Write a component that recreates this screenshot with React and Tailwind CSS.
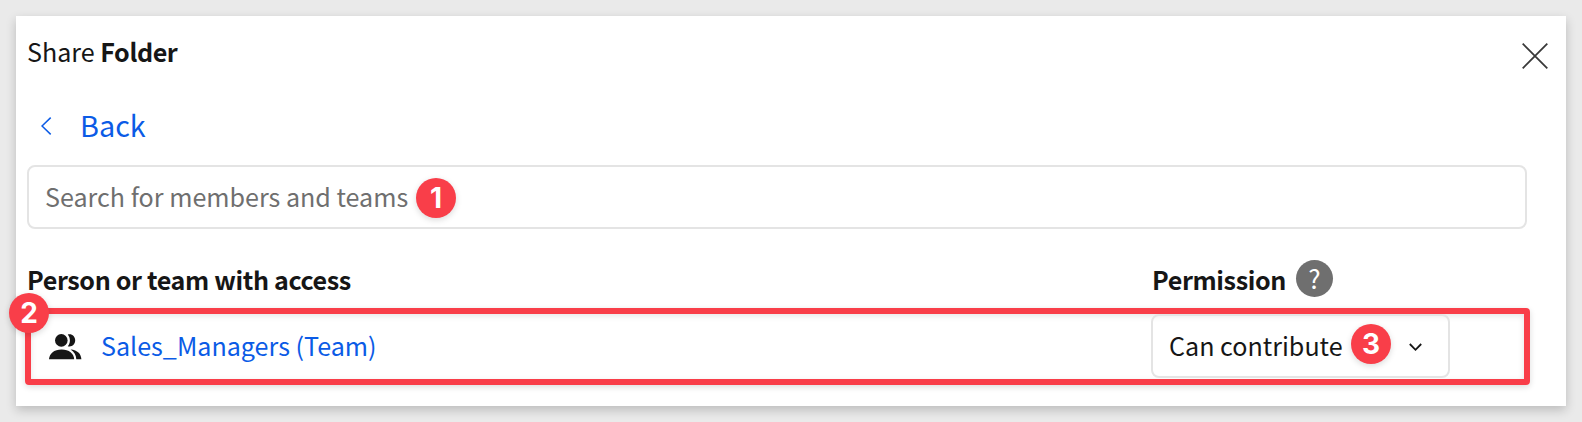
function Badge({ children, className }) {
  return (
    <span
      className={`absolute flex size-10 items-center justify-center rounded-full bg-[#f93e49] font-['Inter'] text-[28px] leading-none font-bold tracking-normal text-white shadow-[0_2px_6px_rgba(0,0,0,0.15)] ${className}`}
    >
      {children}
    </span>
  );
}

function PeopleIcon() {
  return (
    <svg className="ml-[18px] h-[26px] w-[33px] shrink-0" viewBox="0 0 33 26" fill="#161616">
      <circle cx="12.3" cy="6.4" r="6.3" />
      <path d="M0 25.3C0.4 19.3 5 15.4 12.6 15.4S24.8 19.3 25.2 25.3Z" />
      <path d="M18.8 0.5C22.8-0.7 26.2 2.4 26.2 6.3S22.8 13.5 18.8 12.3C21.6 9 21.6 4 18.8 0.5Z" />
      <path d="M21.6 15.6C28.5 16.2 32 19.8 32.4 25.3H27.3C27.1 21.3 25.4 18 21.6 15.6Z" />
    </svg>
  );
}

export default function App() {
  return (
    <div className="h-[422px] w-[1582px] overflow-hidden bg-[#eaeaea] p-4 font-['Noto_Sans_CJK_SC',sans-serif] text-[25.1px] leading-[36px] whitespace-nowrap text-[#161616]">
      <section className="h-[390px] w-[1550px] bg-white pl-[11px] shadow-[0_4px_10px_rgba(0,0,0,0.2)]">
        <header className="flex h-[70px] items-center justify-between">
          <h1>
            Share <b className="font-bold tracking-[-0.4px]">Folder</b>
          </h1>
          <button aria-label="Close" className="mt-[10px] mr-[18px]">
            <svg className="size-[26px]" viewBox="0 0 26 26" stroke="#393939" strokeWidth="1.8">
              <path d="M0.7 0.7 25.3 25.3M25.3 0.7 0.7 25.3" />
            </svg>
          </button>
        </header>
        <a className="flex h-[76px] items-center pl-[14px] text-[28.8px] text-[#0b5be6]">
          <svg className="mt-1 mr-[28px] h-[18px] w-[11px]" viewBox="0 0 11 18" fill="none" stroke="currentColor" strokeWidth="1.5">
            <path d="M9.7 0.6 1 9 9.7 17.4" />
          </svg>
          <span className="mt-[2px]">Back</span>
        </a>
        <div className="relative mt-[3px] flex h-16 w-[1500px] items-center rounded-lg border-2 border-[#e4e4e4] pb-[2px] pl-[16px] text-[#6f6f6f]">
          Search for members and teams
          <Badge className="top-[11px] left-[387px]">1</Badge>
        </div>
        <div className="mt-[21px] flex h-[58px] items-center font-bold tracking-[-0.37px]">
          <span className="w-[1125px]">Person or team with access</span>
          <span>Permission</span>
          <span className="mb-px ml-[10px] flex size-[37px] items-center justify-center rounded-full bg-[#6f6f6f] pb-px text-[26px] font-normal tracking-normal text-white">
            ?
          </span>
        </div>
        <div className="relative -ml-[2px] flex h-[77px] w-[1505px] items-center rounded-[4px] border-[6px] border-[#f93e49] shadow-[0_2px_6px_rgba(0,0,0,0.14),inset_0_2px_6px_rgba(0,0,0,0.1)]">
          <PeopleIcon />
          <a className="mb-[3px] ml-[19px] w-[1050px] text-[#0b5be6]">Sales_Managers (Team)</a>
          <div className="relative mb-px flex h-16 w-[299px] items-center rounded-lg border-2 border-[#e4e4e4] pb-[3px] pl-[16px]">
            Can contribute
            <Badge className="top-[8px] left-[198px]">3</Badge>
            <svg className="absolute top-[27px] left-[256px] h-[9px] w-[13px]" viewBox="0 0 13 9" fill="none" stroke="#161616" strokeWidth="1.8">
              <path d="M0.8 1 6.5 6.8 12.2 1" />
            </svg>
          </div>
          <Badge className="-top-[21px] -left-[22px]">2</Badge>
        </div>
      </section>
    </div>
  );
}
